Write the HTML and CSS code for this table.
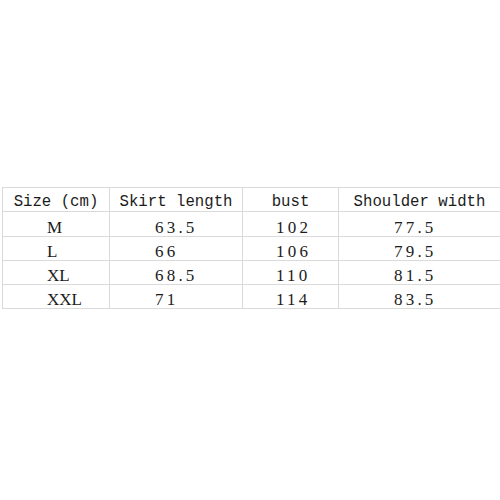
FILE: index.html
```html
<!DOCTYPE html>
<html>
<head>
<meta charset="utf-8">
<link rel="stylesheet" href="styles.css">
</head>
<body>
<table class="sizes">
  <colgroup>
    <col class="c1"><col class="c2"><col class="c3"><col class="c4">
  </colgroup>
  <thead>
    <tr class="head">
      <th>Size (cm)</th><th>Skirt length</th><th>bust</th><th>Shoulder width</th>
    </tr>
  </thead>
  <tbody>
    <tr class="first"><td class="s">M</td><td class="n k">63.5</td><td class="n b">102</td><td class="n w">77.5</td></tr>
    <tr><td class="s">L</td><td class="n k">66</td><td class="n b">106</td><td class="n w">79.5</td></tr>
    <tr><td class="s">XL</td><td class="n k">68.5</td><td class="n b">110</td><td class="n w">81.5</td></tr>
    <tr><td class="s">XXL</td><td class="n k">71</td><td class="n b">114</td><td class="n w">83.5</td></tr>
  </tbody>
</table>
</body>
</html>
```

FILE: styles.css
```css
html, body {
  margin: 0;
  padding: 0;
  background: #ffffff;
}

body {
  width: 500px;
  height: 500px;
  overflow: hidden;
}

.sizes {
  margin: 187px 0 0 2px;
  width: 498px;
  border-collapse: collapse;
  table-layout: fixed;
  color: #1c1c1c;
}

.c1 { width: 107px; }
.c2 { width: 133px; }
.c3 { width: 96px; }
.c4 { width: 162px; }

.sizes th,
.sizes td {
  border: 1px solid #dadada;
  padding: 0;
  vertical-align: top;
  white-space: nowrap;
}

.sizes th {
  font-family: "Liberation Mono", monospace;
  font-size: 15.7px;
  font-weight: normal;
  text-align: center;
  padding-top: 6px;
  line-height: 17px;
  height: 17px;
}

.sizes td {
  font-family: "Liberation Serif", serif;
  font-size: 17px;
  text-align: left;
  padding-top: 6px;
  line-height: 17px;
  height: 17px;
}

.sizes tr.first td {
  padding-top: 7px;
}

.sizes td.n {
  letter-spacing: 3.2px;
}

.sizes td.s { padding-left: 44px; }
.sizes td.k { padding-left: 45px; }
.sizes td.b { padding-left: 33px; }
.sizes td.w { padding-left: 55px; }
```
